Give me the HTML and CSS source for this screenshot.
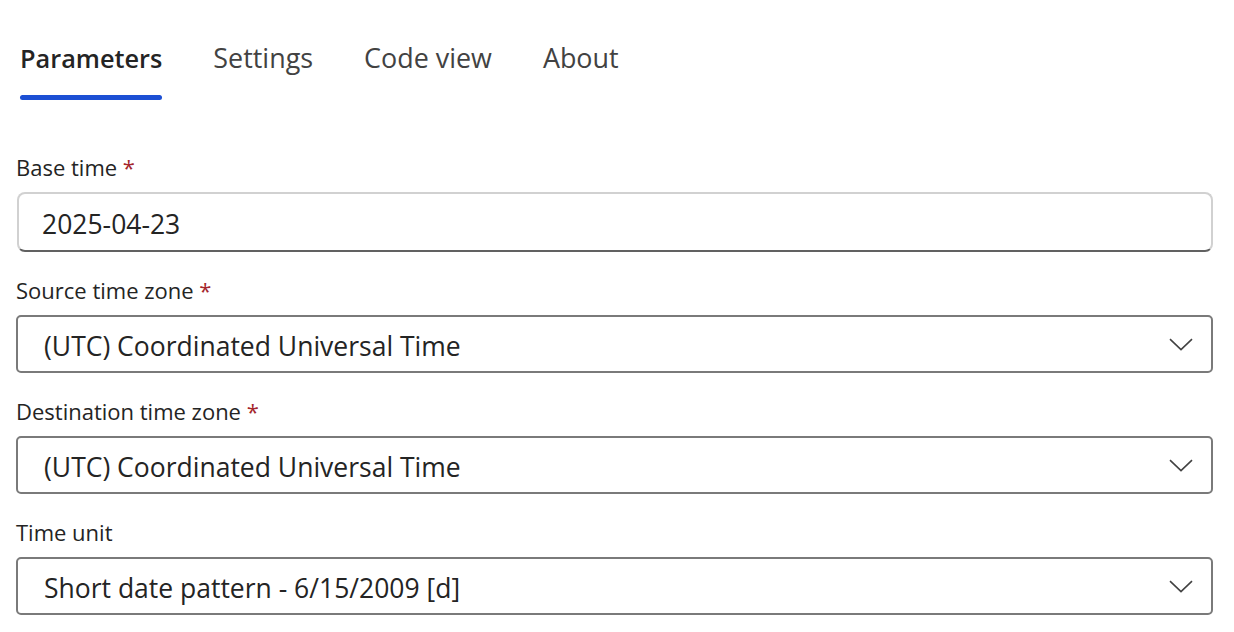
FILE: index.html
```html
<!DOCTYPE html>
<html lang="en">
<head>
<meta charset="utf-8">
<title>Parameters</title>
<link rel="stylesheet" href="styles.css">
</head>
<body>
<div class="page">
  <nav class="tabs">
    <div class="tab active"><span class="tab-label">Parameters</span><span class="indicator"></span></div>
    <div class="tab"><span class="tab-label">Settings</span><span class="indicator"></span></div>
    <div class="tab"><span class="tab-label">Code view</span><span class="indicator"></span></div>
    <div class="tab"><span class="tab-label">About</span><span class="indicator"></span></div>
  </nav>
  <div class="fields">
    <div class="field">
      <label class="label">Base time <span class="req">*</span></label>
      <div class="input"><span class="value">2025-04-23</span></div>
    </div>
    <div class="field">
      <label class="label">Source time zone <span class="req">*</span></label>
      <div class="dropdown"><span class="value">(UTC) Coordinated Universal Time</span>
        <svg class="chevron" width="24" height="13" viewBox="0 0 24 13"><path d="M1 1.2 L12 11.6 L23 1.2" fill="none" stroke="#424242" stroke-width="1.6" stroke-linejoin="miter"/></svg>
      </div>
    </div>
    <div class="field">
      <label class="label">Destination time zone <span class="req">*</span></label>
      <div class="dropdown"><span class="value">(UTC) Coordinated Universal Time</span>
        <svg class="chevron" width="24" height="13" viewBox="0 0 24 13"><path d="M1 1.2 L12 11.6 L23 1.2" fill="none" stroke="#424242" stroke-width="1.6" stroke-linejoin="miter"/></svg>
      </div>
    </div>
    <div class="field">
      <label class="label">Time unit</label>
      <div class="dropdown"><span class="value">Short date pattern - 6/15/2009 [d]</span>
        <svg class="chevron" width="24" height="13" viewBox="0 0 24 13"><path d="M1 1.2 L12 11.6 L23 1.2" fill="none" stroke="#424242" stroke-width="1.6" stroke-linejoin="miter"/></svg>
      </div>
    </div>
  </div>
</div>
</body>
</html>
```
FILE: styles.css
```css
* { box-sizing: border-box; }
html, body { margin: 0; padding: 0; background: #ffffff; }
body {
  font-family: "Open Sans", "Noto Sans", "Liberation Sans", sans-serif;
  color: #242424;
}
.page {
  padding: 40px 21px 0 16px;
}
.tabs {
  display: flex;
  gap: 51px;
  padding-left: 4px;
}
.tab {
  display: flex;
  flex-direction: column;
}
.tab-label {
  font-size: 26.9px;
  line-height: 36px;
  color: #424242;
}
.tab.active .tab-label {
  font-weight: 600;
  font-size: 25.3px;
  color: #242424;
}
.indicator {
  display: block;
  height: 5px;
  margin-top: 19px;
  border-radius: 3px;
  background: transparent;
}
.tab.active .indicator { background: #1c4fd4; }

.fields {
  margin-top: 54px;
  display: flex;
  flex-direction: column;
  gap: 25px;
}
.field {
  display: flex;
  flex-direction: column;
  gap: 12px;
}
.label {
  font-size: 22px;
  line-height: 26px;
  color: #242424;
}
.req { color: #a4262c; }
.input, .dropdown {
  height: 58px;
  display: flex;
  align-items: center;
  font-size: 26.5px;
}
.value {
  color: #242424;
  padding-top: 4px;
}
.input {
  margin-left: 1px;
  border: 2px solid #d1d1d1;
  border-bottom-color: #616161;
  border-radius: 8px;
  padding-left: 23px;
  height: 60px;
}
.dropdown {
  border: 2px solid #7a7a7a;
  border-radius: 5px;
  padding: 0 18px 0 26px;
  justify-content: space-between;
}
.chevron { flex: none; }
```
